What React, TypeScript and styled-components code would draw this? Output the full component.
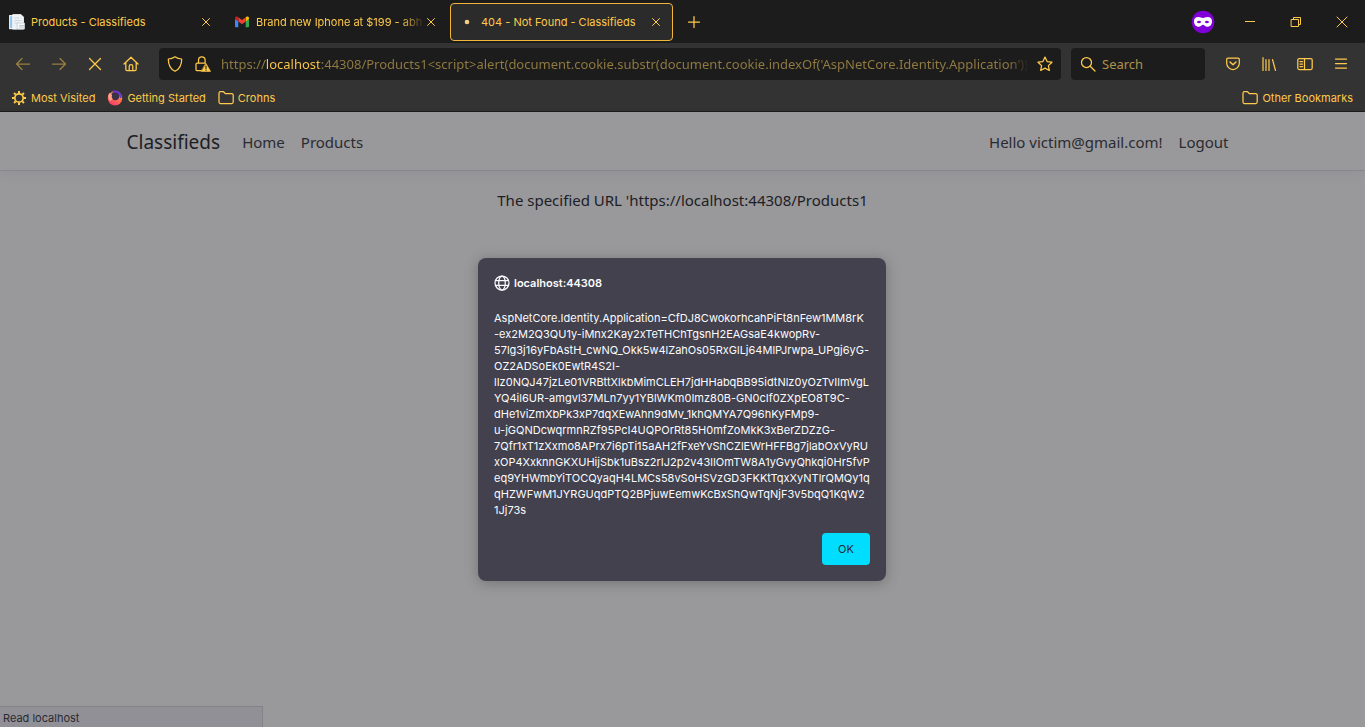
import React from "react";
import styled, { createGlobalStyle } from "styled-components";

const gold = "#ffca4b";
const dimGold = "#927b42";
const uiFont = `Inter, "Open Sans", sans-serif`;
const textFont = `"Noto Sans", "Open Sans", sans-serif`;

const GlobalStyle = createGlobalStyle`
  * { box-sizing: border-box; }
  body {
    margin: 0;
    font-family: ${uiFont};
    font-size: 11px;
    line-height: 16px;
  }
  button, input { font: inherit; }
  a { color: inherit; text-decoration: none; }
`;

const Window = styled.div`
  display: flex;
  flex-direction: column;
  min-height: 100vh;
`;

const Chrome = styled.header`
  color: ${gold};
  background: #333;
  border-bottom: 1px solid #1c1c1c;
`;

const TitleBar = styled.div`
  display: flex;
  align-items: center;
  height: 43px;
  background: #1c1c1c;
`;

const TabList = styled.div`
  display: flex;
  gap: 2px;
`;

const Tab = styled.div<{ $active?: boolean }>`
  display: flex;
  align-items: center;
  width: 223px;
  height: 38px;
  padding: 0 10px 0 8px;
  border: 1px solid ${(p) => (p.$active ? "#f0b73b" : "transparent")};
  border-radius: 4px;
  background: ${(p) => (p.$active ? "#2b2b2b" : "transparent")};
`;

const TabTitle = styled.button<{ $fade?: boolean }>`
  flex: 1;
  min-width: 0;
  margin-left: 6px;
  padding: 0;
  border: 0;
  background: none;
  color: inherit;
  text-align: left;
  white-space: nowrap;
  overflow: hidden;
  mask-image: ${(p) => (p.$fade ? "linear-gradient(to left, transparent, #000 24px)" : "none")};
`;

const IconButton = styled.button<{ $width?: number; $faded?: boolean }>`
  display: flex;
  align-items: center;
  justify-content: center;
  flex: none;
  width: ${(p) => p.$width ?? 36}px;
  height: 32px;
  padding: 0;
  border: 0;
  background: none;
  color: inherit;
  opacity: ${(p) => (p.$faded ? 0.5 : 1)};
`;

const WindowControls = styled.div`
  display: flex;
  align-items: center;
  margin-left: auto;
`;

const PrivateBadge = styled.span`
  display: flex;
  margin-right: 12px;
`;

const ToolBar = styled.div`
  display: flex;
  align-items: center;
  height: 41px;
  padding: 0 6px 0 5px;
`;

const AddressBar = styled.form`
  display: flex;
  align-items: center;
  flex: 1;
  min-width: 0;
  height: 32px;
  margin: 0 10px;
  padding-left: 2px;
  border-radius: 4px;
  background: #1c1c1c;
`;

const AddressInput = styled.input`
  flex: 1;
  min-width: 0;
  height: 24px;
  margin-left: 5px;
  padding: 0;
  border: 0;
  outline: 0;
  font-family: ${textFont};
  font-size: 13px;
  background: linear-gradient(
    to right,
    ${dimGold} 44px,
    ${gold} 44px,
    ${gold} 98px,
    ${dimGold} 98px,
    ${dimGold} calc(100% - 20px),
    transparent
  );
  background-clip: text;
  -webkit-background-clip: text;
  -webkit-text-fill-color: transparent;
`;

const SearchBar = styled.label`
  display: flex;
  align-items: center;
  gap: 6px;
  width: 134px;
  height: 32px;
  margin-right: 10px;
  padding: 0 9px;
  border-radius: 4px;
  background: #1c1c1c;
`;

const SearchInput = styled.input`
  flex: 1;
  min-width: 0;
  padding: 0;
  border: 0;
  outline: 0;
  background: none;
  color: ${gold};
  font-family: ${textFont};
  font-size: 13px;
  &::placeholder { color: #ae924c; opacity: 1; }
`;

const BookmarkBar = styled.nav`
  display: flex;
  align-items: center;
  gap: 12px;
  height: 27px;
  padding: 0 12px 0 11px;
`;

const Bookmark = styled.a<{ $end?: boolean }>`
  display: flex;
  align-items: center;
  gap: 4px;
  margin-left: ${(p) => (p.$end ? "auto" : 0)};
`;

const Viewport = styled.div`
  position: relative;
  flex: 1;
  display: flex;
  flex-direction: column;
  background: #fff;
  color: #212529;
  font-family: ${textFont};
  font-size: 15px;
  line-height: 24px;
`;

const SiteHeader = styled.header`
  border-bottom: 1px solid #dee2e6;
  box-shadow: 0 4px 12px rgba(0, 0, 0, 0.05);
`;

const SiteNav = styled.nav`
  display: flex;
  align-items: center;
  width: 100%;
  max-width: 1140px;
  height: 58px;
  margin: 0 auto;
  padding: 2px 16px 0 14px;
`;

const Brand = styled.a`
  margin-right: 14px;
  font-size: 19px;
`;

const SiteLink = styled.a`
  padding: 0 8px;
  color: #343a40;
`;

const Account = styled.div`
  display: flex;
  align-items: center;
  margin-left: auto;
`;

const Message = styled.main`
  padding-top: 17px;
  text-align: center;
`;

const StatusPanel = styled.div`
  width: 263px;
  height: 21px;
  margin-top: auto;
  padding: 2px 3px;
  border: 1px solid #d7d7db;
  border-width: 1px 1px 0 0;
  background: #f0f0f7;
  color: #38383d;
  font-family: ${uiFont};
  font-size: 11px;
  line-height: 18px;
`;

const Backdrop = styled.div`
  position: absolute;
  inset: 0;
  display: flex;
  align-items: center;
  justify-content: center;
  padding-right: 1px;
  background: rgba(28, 27, 34, 0.45);
`;

const Dialog = styled.section`
  display: flex;
  flex-direction: column;
  width: 408px;
  padding: 16px;
  border-radius: 8px;
  background: #42414d;
  color: #fbfbfe;
  box-shadow: 0 2px 14px rgba(0, 0, 0, 0.25);
  font-family: ${uiFont};
  font-size: 11px;
`;

const DialogTitle = styled.h1`
  display: flex;
  align-items: center;
  gap: 4px;
  margin: 0 0 18px;
  font-size: 11px;
  font-weight: 600;
  line-height: 18px;
`;

const DialogText = styled.p`
  margin: 0 0 15px;
  line-height: 16px;
  white-space: pre;
`;

const OkButton = styled.button`
  align-self: flex-end;
  width: 48px;
  height: 32px;
  padding: 0;
  border: 0;
  border-radius: 4px;
  background: #00ddff;
  color: #2b2a33;
`;

const IconSvg = styled.svg`
  flex: none;
`;

const Icon = ({ children, size = 16 }: { children: React.ReactNode; size?: number }) => (
  <IconSvg
    width={size}
    height={size}
    viewBox={`0 0 ${size} ${size}`}
    fill="none"
    stroke="currentColor"
    strokeWidth="1.25"
    strokeLinecap="round"
    strokeLinejoin="round"
    aria-hidden="true"
  >
    {children}
  </IconSvg>
);

const CloseIcon = () => (
  <Icon><path d="M4.500 4.500l7 7M11.500 4.500l-7 7" strokeWidth="1" /></Icon>
);

const FolderIcon = () => (
  <Icon><path d="M1 3.200a1.500 1.500 0 0 1 1.500-1.500h3l2 2h6.200a1.500 1.500 0 0 1 1.500 1.500v6.800a1.500 1.500 0 0 1-1.500 1.500H2.500A1.500 1.500 0 0 1 1 12z" /></Icon>
);

const PageIcon = () => (
  <Icon>
    <path d="M.6 1.500h7v13H.6z" fill="#8ec3e6" stroke="#dbe9f3" />
    <path d="M4 .6h8l2.500 2.500v12H4z" fill="#eef2f6" stroke="#fff" strokeWidth=".8" />
    <path d="M6 4h4M6 6.500h6M6 9h3" stroke="#c4d0dc" strokeWidth=".8" />
    <path d="M8.500 9h7v6h-7z" fill="#f6f8fa" stroke="#c6ced6" strokeWidth=".8" />
    <path d="M10.500 11.500h4M10.500 13h4" stroke="#a8b4c0" strokeWidth=".7" />
  </Icon>
);

const GmailIcon = () => (
  <Icon>
    <g stroke="none">
      <path d="M1 5v7.200c0 .6.4 1 1 1h2.300V7.200z" fill="#4285f4" />
      <path d="M11.700 13.200H14c.6 0 1-.4 1-1V5l-3.300 2.200z" fill="#34a853" />
      <path d="M11.700 3.500v3.900L15 5V4c0-1.500-1.600-2.100-2.600-1.200z" fill="#fbbc04" />
      <path d="M4.300 7.400V3.300L8 6.100l3.700-2.800v4.100L8 10.200z" fill="#ea4335" />
      <path d="M1 4v1l3.300 2.400V3.300l-.7-.5C2.600 2 1 2.500 1 4z" fill="#c5221f" />
    </g>
  </Icon>
);

const FirefoxIcon = () => (
  <Icon>
    <defs>
      <linearGradient id="flame" x1="0.8" y1="0" x2="0.2" y2="1">
        <stop offset="0" stopColor="#ff9a4d" />
        <stop offset=".5" stopColor="#ff6a55" />
        <stop offset="1" stopColor="#ee3a68" />
      </linearGradient>
    </defs>
    <circle cx="8" cy="8.300" r="7.200" fill="url(#flame)" stroke="none" />
    <circle cx="8.300" cy="6" r="4.200" fill="#3a3244" stroke="none" />
    <path d="M6.500 1.600c4-.6 7 1.600 7.300 5.400" stroke="#6b35c9" strokeWidth="2" />
    <path d="M2 3.200c1.800.2 2.800 1 3.100 2.200-.9 1.200-.5 2.600.8 3.500L3 11C1 9 .8 5.200 2 3.200z" fill="#ffa58a" stroke="none" />
  </Icon>
);

const GearIcon = () => (
  <Icon>
    <circle cx="8" cy="8" r="4.200" strokeWidth="1.700" />
    <path
      d="M8 1v2.300M8 12.700V15M1 8h2.300M12.700 8H15M3.050 3.050l1.600 1.600M11.350 11.350l1.600 1.600M3.050 12.950l1.600-1.600M11.350 4.650l1.600-1.600"
      strokeWidth="2"
      strokeLinecap="butt"
    />
  </Icon>
);

const SearchIcon = () => (
  <Icon><circle cx="6.500" cy="6.500" r="5" /><path d="M10.200 10.200L15 15" /></Icon>
);

const tabs = [
  { title: "Products - Classifieds", icon: <PageIcon /> },
  { title: "Brand new Iphone at $199 - abh", icon: <GmailIcon />, fade: true },
  {
    title: "404 - Not Found - Classifieds",
    icon: <Icon><circle cx="8" cy="8" r="2.300" fill="#f3cf85" stroke="none" /></Icon>,
    active: true,
  },
];

const address =
  "https://localhost:44308/Products1<script>alert(document.cookie.substr(document.cookie.indexOf('AspNetCore.Identity.Application'))";

const cookieLines = [
  "AspNetCore.Identity.Application=CfDJ8CwokorhcahPiFt8nFew1MM8rK",
  "-ex2M2Q3QU1y-iMnx2Kay2xTeTHChTgsnH2EAGsaE4kwopRv-",
  "57lg3j16yFbAstH_cwNQ_Okk5w4lZahOs05RxGlLj64MlPJrwpa_UPgj6yG-",
  "OZ2ADSoEk0EwtR4S2I-",
  "lIz0NQJ47jzLe01VRBttXlkbMimCLEH7jdHHabqBB95idtNlz0yOzTvIlmVgL",
  "YQ4il6UR-amgvl37MLn7yy1YBlWKm0Imz80B-GN0cIf0ZXpEO8T9C-",
  "dHe1viZmXbPk3xP7dqXEwAhn9dMv_1khQMYA7Q96hKyFMp9-",
  "u-jGQNDcwqrmnRZf95PcI4UQPOrRt85H0mfZoMkK3xBerZDZzG-",
  "7Qfr1xT1zXxmo8APrx7i6pTi15aAH2fFxeYvShCZlEWrHFFBg7jlabOxVyRU",
  "xOP4XxknnGKXUHijSbk1uBsz2rIJ2p2v43lIOmTW8A1yGvyQhkqi0Hr5fvP",
  "eq9YHWmbYiTOCQyaqH4LMCs58vSoHSVzGD3FKKtTqxXyNTlrQMQy1q",
  "qHZWFwM1JYRGUqdPTQ2BPjuwEemwKcBxShQwTqNjF3v5bqQ1KqW2",
  "1Jj73s",
];

export default function App() {
  return (
    <Window>
      <GlobalStyle />
      <Chrome>
        <TitleBar>
          <TabList>
            {tabs.map((tab) => (
              <Tab key={tab.title} $active={tab.active}>
                {tab.icon}
                <TabTitle type="button" $fade={tab.fade}>{tab.title}</TabTitle>
                <IconButton type="button" $width={12} aria-label="Close tab"><CloseIcon /></IconButton>
              </Tab>
            ))}
          </TabList>
          <IconButton type="button" $width={42} aria-label="New tab">
            <Icon><path d="M8 2.500v11M2.500 8h11" /></Icon>
          </IconButton>
          <WindowControls>
            <PrivateBadge>
              <Icon size={24}>
                <circle cx="12" cy="12" r="11.300" fill="#8000d7" stroke="none" />
                <path
                  d="M7.500 7c2 0 3 .9 4.500.9s2.500-.9 4.500-.9c3.200 0 4.500 1.700 4.500 4.300 0 3.400-1.900 5.500-4.700 5.500-2.300 0-3-2-4.300-2s-2 2-4.300 2c-2.600 0-4.700-2.100-4.700-5.500C3 8.700 4.300 7 7.500 7z"
                  fill="#fff"
                  stroke="none"
                />
                <path d="M5.800 12c1.200-1.800 3.300-1.800 4.500 0-1.200 1.600-3.300 1.600-4.500 0zM13.700 12c1.200-1.800 3.300-1.800 4.500 0-1.200 1.600-3.300 1.600-4.500 0z" fill="#8000d7" stroke="none" />
              </Icon>
            </PrivateBadge>
            <IconButton type="button" $width={46} aria-label="Minimize">
              <Icon><path d="M3 7.500h10" strokeWidth="1" strokeLinecap="butt" /></Icon>
            </IconButton>
            <IconButton type="button" $width={46} aria-label="Restore">
              <Icon><path d="M3.500 5.500h7v7h-7zM5.500 5.500v-2h7v7h-2" strokeWidth="1" strokeLinejoin="miter" /></Icon>
            </IconButton>
            <IconButton type="button" $width={46} aria-label="Close window">
              <Icon><path d="M3 3l10 10M13 3L3 13" strokeWidth="1" /></Icon>
            </IconButton>
          </WindowControls>
        </TitleBar>
        <ToolBar>
          <IconButton type="button" $faded aria-label="Back">
            <Icon><path d="M14.500 8H1.500M7 2.500L1.500 8 7 13.500" /></Icon>
          </IconButton>
          <IconButton type="button" $faded aria-label="Forward">
            <Icon><path d="M1.500 8h13M9 2.500L14.500 8 9 13.500" /></Icon>
          </IconButton>
          <IconButton type="button" aria-label="Stop">
            <Icon><path d="M2.500 2.500l11 11M13.500 2.500l-11 11" /></Icon>
          </IconButton>
          <IconButton type="button" aria-label="Home">
            <Icon>
              <path d="M1 8L8 1.200 15 8M2.800 6.500v6.800c0 .8.5 1.300 1.300 1.300h7.800c.8 0 1.300-.5 1.300-1.300V6.500" />
              <path d="M6.200 14.500V10.500a1.800 1.800 0 0 1 3.600 0v4" />
            </Icon>
          </IconButton>
          <AddressBar onSubmit={(e) => e.preventDefault()}>
            <IconButton type="button" $width={28} aria-label="Tracking protection">
              <Icon><path d="M8 .8c2 1.400 4.200 2.100 6.700 2.200 0 5.700-1.700 10-6.700 12.300C3 13 1.300 8.700 1.300 3 3.800 2.900 6 2.200 8 .8z" /></Icon>
            </IconButton>
            <IconButton type="button" $width={27} aria-label="Connection not secure">
              <Icon>
                <path d="M3.500 7V4.200a3.300 3.300 0 0 1 6.600 0V7M6 14.700H2.300c-.8 0-1.300-.5-1.300-1.300V8.300C1 7.500 1.500 7 2.300 7h8" />
                <path d="M11 7.500l4.600 7.900H6.400z" fill="currentColor" strokeWidth=".6" />
                <path d="M11 10v2.600M11 14v.3" stroke="#1c1c1c" strokeWidth="1.100" />
              </Icon>
            </IconButton>
            <AddressInput aria-label="Address" defaultValue={address} spellCheck={false} />
            <IconButton type="button" $width={32} aria-label="Bookmark this page">
              <Icon><path d="M8 1.100l2.100 4.500 4.900.6-3.600 3.400.9 4.900L8 12.100l-4.300 2.400.9-4.900L1 6.200l4.900-.6z" /></Icon>
            </IconButton>
          </AddressBar>
          <SearchBar>
            <SearchIcon />
            <SearchInput type="search" aria-label="Search" placeholder="Search" />
          </SearchBar>
          <IconButton type="button" aria-label="Save to Pocket">
            <Icon>
              <path d="M3 2h10c.8 0 1.300.5 1.300 1.300v3.900a6.300 6.300 0 0 1-12.600 0V3.300C1.700 2.500 2.200 2 3 2z" />
              <path d="M5 6L8 8.800 11 6" strokeWidth="1.500" />
            </Icon>
          </IconButton>
          <IconButton type="button" aria-label="Library">
            <Icon><path d="M2 1.500v13M5 3.500v11M8 3.500v11M11.500 3.500l3 11" strokeWidth="1.200" /></Icon>
          </IconButton>
          <IconButton type="button" aria-label="Sidebars">
            <Icon>
              <rect x=".8" y="2.500" width="14.400" height="11" rx="1.500" />
              <path d="M7.500 2.500v11M3 5.500h2.500M3 8h2.500M3 10.500h2.500" />
            </Icon>
          </IconButton>
          <IconButton type="button" aria-label="Menu">
            <Icon><path d="M2.500 3h11M2.500 7.500h11M2.500 12h11" /></Icon>
          </IconButton>
        </ToolBar>
        <BookmarkBar aria-label="Bookmarks">
          <Bookmark href="#most-visited"><GearIcon />Most Visited</Bookmark>
          <Bookmark href="#getting-started"><FirefoxIcon />Getting Started</Bookmark>
          <Bookmark href="#crohns"><FolderIcon />Crohns</Bookmark>
          <Bookmark href="#other" $end><FolderIcon />Other Bookmarks</Bookmark>
        </BookmarkBar>
      </Chrome>
      <Viewport>
        <SiteHeader>
          <SiteNav>
            <Brand href="#">Classifieds</Brand>
            <SiteLink href="#home">Home</SiteLink>
            <SiteLink href="#products">Products</SiteLink>
            <Account>
              <SiteLink href="#account">Hello victim@gmail.com!</SiteLink>
              <SiteLink href="#logout">Logout</SiteLink>
            </Account>
          </SiteNav>
        </SiteHeader>
        <Message>The specified URL 'https://localhost:44308/Products1</Message>
        <StatusPanel>Read localhost</StatusPanel>
        <Backdrop>
          <Dialog role="alertdialog" aria-labelledby="dialog-title" aria-describedby="dialog-text">
            <DialogTitle id="dialog-title">
              <Icon>
                <circle cx="8" cy="8" r="7" />
                <ellipse cx="8" cy="8" rx="3.300" ry="7" />
                <path d="M1.500 5.700h13M1.500 10.300h13" />
              </Icon>
              localhost:44308
            </DialogTitle>
            <DialogText id="dialog-text">{cookieLines.join("\n")}</DialogText>
            <OkButton type="button">OK</OkButton>
          </Dialog>
        </Backdrop>
      </Viewport>
    </Window>
  );
}
